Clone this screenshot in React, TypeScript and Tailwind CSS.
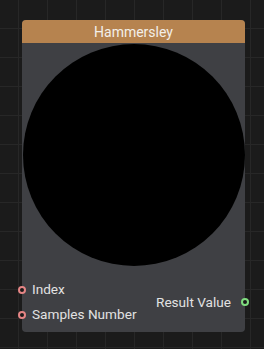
import React from 'react';

interface Port {
  name: string;
  color: string;
}

const inputs: Port[] = [
  { name: 'Index', color: 'border-[#e58585]' },
  { name: 'Samples Number', color: 'border-[#e58585]' },
];

const Pin: React.FC<{ color: string; side: 'left' | 'right' }> = ({ color, side }) => (
  <span
    className={`absolute top-1/2 -translate-y-1/2 w-[8px] h-[8px] rounded-full border-2 bg-[#1a1a1a] ${color} ${
      side === 'left' ? 'left-[-4px]' : 'right-[-4px]'
    }`}
  />
);

const App: React.FC = () => {
  return (
    <div
      className="w-[264px] h-[349px] overflow-hidden bg-[#1b1b1b] bg-[linear-gradient(to_right,#272727_1px,transparent_1px),linear-gradient(to_bottom,#272727_1px,transparent_1px)] bg-[size:29px_29px] bg-[position:18px_28px] pt-[20px] pl-[22px]"
      style={{ fontFamily: 'Roboto, "Liberation Sans", sans-serif' }}
    >
      <div className="w-[223px] h-[312px] rounded-[4px] bg-[#3f4044] flex flex-col">
        <div className="h-[23px] rounded-t-[4px] bg-[#b6834f] flex items-center justify-center text-[14px] text-[#f3efe9] leading-none">
          Hammersley
        </div>

        <div className="flex justify-center pt-[1px]">
          <div className="w-[222px] h-[222px] rounded-full bg-black" />
        </div>

        <div className="flex items-center justify-between mt-[11px] text-[13.6px] text-[#e2e2e2]">
          <div className="flex flex-col">
            {inputs.map((p) => (
              <div key={p.name} className="relative h-[25px] flex items-center pl-[10px]">
                <Pin color={p.color} side="left" />
                {p.name}
              </div>
            ))}
          </div>
          <div className="relative h-[25px] flex items-center pr-[14px]">
            Result Value
            <Pin color="border-[#7fdc7f]" side="right" />
          </div>
        </div>
      </div>
    </div>
  );
};

export default App;
